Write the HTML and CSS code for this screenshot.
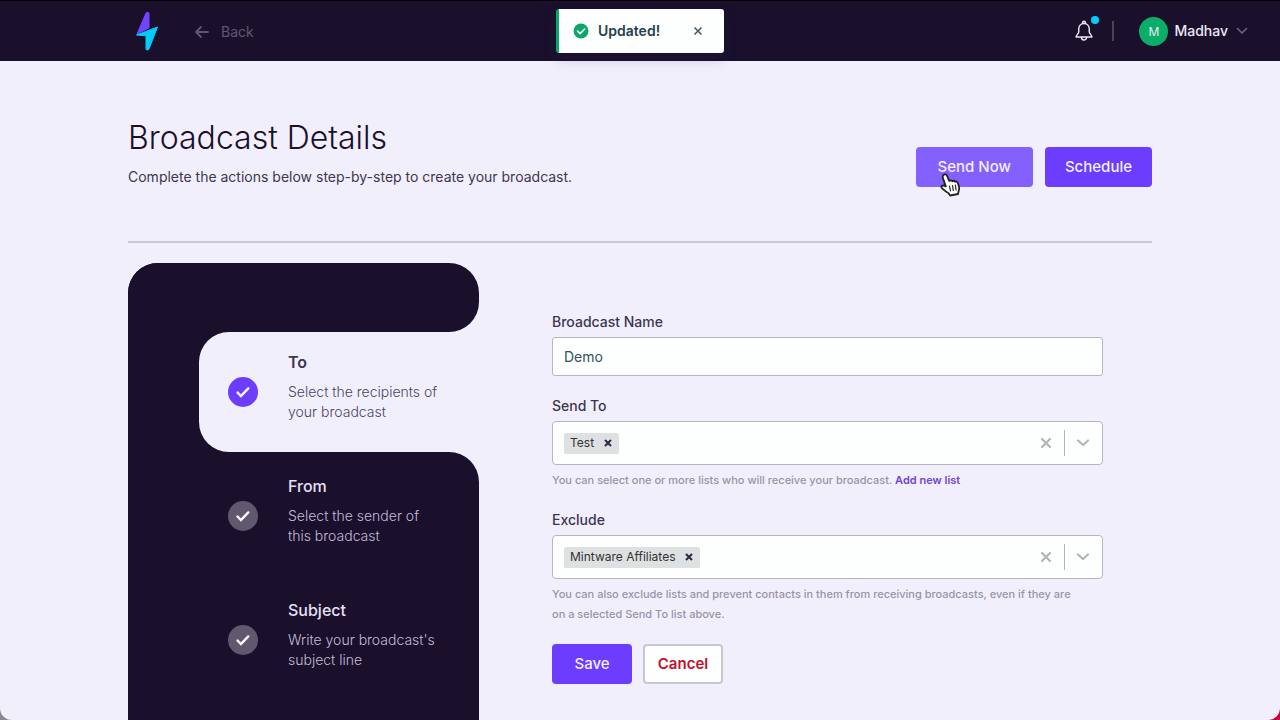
FILE: index.html
```html
<!DOCTYPE html>
<html lang="en">
<head>
  <meta charset="UTF-8" />
  <meta name="viewport" content="width=device-width, initial-scale=1.0"/>
  <title>Broadcast Details</title>
  <link rel="stylesheet" href="styles.css">
</head>
<body>
  <div class="app">
    <header class="topbar">
      <a href="#" class="logo" aria-label="Home">
        <svg width="24" height="40" viewBox="0 0 24 40">
          <path d="M14 2v15L2 23 11 2Q12 .5 14 2z" fill="#7443ff" stroke="#7443ff" stroke-linejoin="round"/>
          <path d="M1.500 24 22.500 16 14 38Q12.500 39.500 11 38.500V24.800z" fill="#0cf" stroke="#0cf" stroke-linejoin="round"/>
        </svg>
      </a>
      <a href="#" class="back">
        <svg width="16" height="14" viewBox="0 0 16 14" fill="none" stroke="currentColor" stroke-width="1.800" stroke-linecap="round" stroke-linejoin="round"><path d="M14 7H2M7 2 2 7l5 5"/></svg>
        Back
      </a>
      <div class="account">
        <button class="bell" aria-label="Notifications">
          <svg width="20" height="22" viewBox="0 0 18 20" fill="none" stroke="currentColor" stroke-width="1.300" stroke-linecap="round" stroke-linejoin="round"><path d="M9 3.200c-3 0-4.800 2.200-4.800 5v2.600c0 1.800-2.400 2.800-2.400 4.700h14.400c0-1.900-2.400-2.900-2.400-4.700V8.200c0-2.800-1.800-5-4.800-5zM7.700 3.300V2.500a1.300 1.300 0 0 1 2.600 0v.8M6.700 15.800a2.300 2.300 0 0 0 4.600 0"/></svg>
          <span class="bell-dot"></span>
        </button>
        <span class="divider"></span>
        <button class="user">
          <span class="avatar">M</span>
          Madhav
          <svg class="user-arrow" width="12" height="8" viewBox="0 0 12 8" fill="none" stroke="currentColor" stroke-width="1.600" stroke-linecap="round" stroke-linejoin="round"><path d="m1.500 1.500 4.500 4.500 4.500-4.500"/></svg>
        </button>
      </div>
      <div class="toast" role="status">
        <svg width="16" height="16" viewBox="0 0 16 16"><circle cx="8" cy="8" r="7.500" fill="#0ba768"/><path d="m4.500 8 2.600 2.600 4.600-4.600" fill="none" stroke="#fff" stroke-width="1.600" stroke-linecap="round" stroke-linejoin="round"/></svg>
        <span>Updated!</span>
        <button class="toast-close" aria-label="Close">
          <svg width="10" height="10" viewBox="0 0 10 10" stroke="currentColor" stroke-width="1.600"><path d="m1.500 1.500 7 7M8.500 1.500l-7 7"/></svg>
        </button>
      </div>
    </header>

    <main class="page">
      <div class="page-head">
        <div>
          <h1>Broadcast Details</h1>
          <p class="subtitle">Complete the actions below step-by-step to create your broadcast.</p>
        </div>
        <div class="actions">
          <button class="btn btn-send">
            Send Now
            <svg class="pointer" width="22" height="24" viewBox="0 0 22 24">
              <path d="M4.200 1.500c1.300-.7 2.400.1 2.900 1.400l2.100 5 .8-.3c1-.4 1.900-.1 2.400.6 1-.6 2-.4 2.600.5 1.300-.5 2.400.1 2.900 1.600l1 3.200c.5 1.700.3 3-.2 4.300l-.7 3.200-7.900 1.500-1.700-2.500c-2-1-4.300-2.900-6.300-4.700-1.400-1.300-.4-3.200 1.600-2.700l2.100.8-2.900-8.300c-.5-1.500.2-3 1.300-3.600z" fill="#fff" stroke="#222" stroke-width="1.800" stroke-linejoin="round"/>
              <path d="m9.500 13 1 4.800M12.500 12.500l.8 4.800M15.300 12l.8 4.800" stroke="#222" stroke-width="1.200" stroke-linecap="round"/>
            </svg>
          </button>
          <button class="btn">Schedule</button>
        </div>
      </div>

      <div class="content">
        <nav class="steps">
          <div class="steps-cap"></div>
          <a href="#" class="step active">
            <span class="check"><svg width="16" height="14" viewBox="0 0 16 14"><path d="m2.500 7.500 3.400 3.500 7.400-7.600" fill="none" stroke="#fff" stroke-width="2.400" stroke-linecap="round"/></svg></span>
            <span class="step-text">
              <strong>To</strong>
              <span>Select the recipients of<br>your broadcast</span>
            </span>
          </a>
          <div class="steps-rest">
            <a href="#" class="step">
              <span class="check"><svg width="16" height="14" viewBox="0 0 16 14"><path d="m2.500 7.500 3.400 3.500 7.400-7.600" fill="none" stroke="#fff" stroke-width="2.400" stroke-linecap="round"/></svg></span>
              <span class="step-text">
                <strong>From</strong>
                <span>Select the sender of<br>this broadcast</span>
              </span>
            </a>
            <a href="#" class="step">
              <span class="check"><svg width="16" height="14" viewBox="0 0 16 14"><path d="m2.500 7.500 3.400 3.500 7.400-7.600" fill="none" stroke="#fff" stroke-width="2.400" stroke-linecap="round"/></svg></span>
              <span class="step-text">
                <strong>Subject</strong>
                <span>Write your broadcast's<br>subject line</span>
              </span>
            </a>
          </div>
        </nav>

        <form class="form">
          <div class="field">
            <label for="name">Broadcast Name</label>
            <input type="text" id="name" class="text-input" value="Demo">
          </div>

          <div class="field">
            <label for="send-to">Send To</label>
            <div class="multi">
              <span class="chip">Test
                <button type="button" aria-label="Remove Test"><svg width="8" height="8" viewBox="0 0 8 8" stroke="currentColor" stroke-width="2"><path d="m1 1 6 6M7 1 1 7"/></svg></button>
              </span>
              <input type="text" id="send-to" class="multi-input">
              <button type="button" class="clear" aria-label="Clear"><svg width="12" height="12" viewBox="0 0 12 12" stroke="currentColor" stroke-width="2.200" stroke-linecap="round"><path d="m2 2 8 8M10 2l-8 8"/></svg></button>
              <span class="multi-line"></span>
              <button type="button" class="open" aria-label="Open"><svg width="14" height="10" viewBox="0 0 14 10" fill="none" stroke="currentColor" stroke-width="2.200" stroke-linecap="round" stroke-linejoin="round"><path d="m2 2.500 5 4.500 5-4.500"/></svg></button>
            </div>
            <p class="help">You can select one or more lists who will receive your broadcast. <a href="#">Add new list</a></p>
          </div>

          <div class="field">
            <label for="exclude">Exclude</label>
            <div class="multi">
              <span class="chip">Mintware Affiliates
                <button type="button" aria-label="Remove Mintware Affiliates"><svg width="8" height="8" viewBox="0 0 8 8" stroke="currentColor" stroke-width="2"><path d="m1 1 6 6M7 1 1 7"/></svg></button>
              </span>
              <input type="text" id="exclude" class="multi-input">
              <button type="button" class="clear" aria-label="Clear"><svg width="12" height="12" viewBox="0 0 12 12" stroke="currentColor" stroke-width="2.200" stroke-linecap="round"><path d="m2 2 8 8M10 2l-8 8"/></svg></button>
              <span class="multi-line"></span>
              <button type="button" class="open" aria-label="Open"><svg width="14" height="10" viewBox="0 0 14 10" fill="none" stroke="currentColor" stroke-width="2.200" stroke-linecap="round" stroke-linejoin="round"><path d="m2 2.500 5 4.500 5-4.500"/></svg></button>
            </div>
            <p class="help">You can also exclude lists and prevent contacts in them from receiving broadcasts, even if they are<br>on a selected Send To list above.</p>
          </div>

          <div class="form-buttons">
            <button type="submit" class="btn">Save</button>
            <button type="button" class="btn btn-cancel">Cancel</button>
          </div>
        </form>
      </div>
    </main>
  </div>
</body>
</html>
```
FILE: styles.css
```css
* {
  box-sizing: border-box;
}

html {
  background: linear-gradient(to right, #8b8b8f 50%, #c8003c 50%);
}

body {
  margin: 0;
  font-family: 'Inter', 'Liberation Sans', sans-serif;
  font-size: 14px;
  line-height: 20px;
  color: #3c3650;
}

h1, p {
  margin: 0;
}

a {
  color: inherit;
  text-decoration: none;
}

button, input {
  font: inherit;
  color: inherit;
}

button {
  padding: 0;
  border: none;
  background: none;
  cursor: pointer;
}

svg {
  display: block;
}

.app {
  height: 100vh;
  overflow: hidden;
  background-color: #f2effd;
  border-radius: 0 0 12px 12px;
}

/* top bar */
.topbar {
  position: relative;
  display: flex;
  align-items: center;
  height: 61px;
  padding: 0 32px 0 135px;
  background-color: #1a102c;
  border-top: 1px solid #05020c;
}

.back {
  display: flex;
  align-items: center;
  gap: 11px;
  margin-left: 35px;
  padding-top: 2px;
  color: #5f5870;
}

.account {
  display: flex;
  align-items: center;
  margin-left: auto;
  color: #ece8f8;
}

.bell {
  position: relative;
}

.bell-dot {
  position: absolute;
  top: -4px;
  right: -5px;
  width: 8px;
  height: 8px;
  border-radius: 50%;
  background-color: #0cf;
}

.divider {
  width: 2px;
  height: 20px;
  margin: 0 25px 0 18px;
  background-color: #4a4359;
}

.user {
  display: flex;
  align-items: center;
  gap: 6px;
  font-weight: 500;
}

.avatar {
  width: 29px;
  height: 29px;
  border-radius: 50%;
  background-color: #0bae68;
  font-size: 12px;
  font-weight: 400;
  line-height: 29px;
  text-align: center;
}

.user-arrow {
  margin-left: 2px;
  color: #6c657b;
}

.toast {
  position: absolute;
  top: 8px;
  left: 50%;
  display: flex;
  align-items: center;
  width: 168px;
  height: 44px;
  padding: 0 21px 0 14px;
  transform: translateX(-50%);
  background-color: #fcfffe;
  border-left: 3px solid #0ba768;
  border-radius: 3px;
  box-shadow: 0 6px 14px rgba(40, 40, 90, 0.2);
  font-weight: 600;
  color: #25404f;
}

.toast span {
  margin-left: 9px;
}

.toast-close {
  margin-left: auto;
  color: #4a5b66;
}

/* page */
.page {
  padding: 55px 10% 0;
}

.page-head {
  display: flex;
  align-items: flex-end;
  justify-content: space-between;
  padding-bottom: 54px;
  border-bottom: 2px solid #c8c6d9;
}

h1 {
  margin-bottom: 7px;
  font-size: 32px;
  font-weight: 300;
  line-height: 44px;
  color: #1a102c;
}

.actions {
  display: flex;
  gap: 12px;
}

.btn {
  height: 40px;
  padding: 0 20px;
  border-radius: 4px;
  background-color: #6c3cff;
  font-size: 15px;
  font-weight: 500;
  color: #f2effd;
}

.btn-send {
  position: relative;
  padding: 0 22px;
  background-color: #8460ff;
}

.pointer {
  position: absolute;
  top: 26px;
  left: 24px;
}

.content {
  display: flex;
  align-items: flex-start;
  padding-top: 20px;
}

/* steps */
.steps {
  flex: 0 0 351px;
  background: linear-gradient(to right, #1a102c 110px, transparent 110px);
  border-radius: 30px 30px 0 0;
}

.steps-cap {
  height: 69px;
  background-color: #1a102c;
  border-radius: 30px 30px 30px 0;
}

.steps-rest {
  display: flex;
  flex-direction: column;
  gap: 4px;
  min-height: 400px;
  padding-top: 4px;
  background-color: #1a102c;
  border-radius: 0 30px 0 0;
}

.step {
  display: flex;
  align-items: center;
  gap: 30px;
  height: 120px;
  margin-left: 71px;
  padding-left: 29px;
  color: #c3bcd6;
}

.step.active {
  background-color: #f2effd;
  border-radius: 30px 0 0 30px;
  color: #4b4560;
}

.check {
  display: flex;
  align-items: center;
  justify-content: center;
  width: 30px;
  height: 30px;
  border-radius: 50%;
  background-color: #5f586e;
}

.step.active .check {
  background-color: #6c3cff;
}

.step-text {
  display: flex;
  flex-direction: column;
  gap: 10px;
  padding-bottom: 10px;
  font-weight: 300;
}

.step-text strong {
  font-size: 16px;
  font-weight: 500;
  color: #e6e0f5;
}

.step.active strong {
  font-weight: 600;
  color: #3c3650;
}

/* form */
.form {
  flex: 1;
  display: flex;
  flex-direction: column;
  gap: 20px;
  padding: 49px 49px 0 73px;
}

.field {
  display: flex;
  flex-direction: column;
  gap: 5px;
}

.field label {
  font-weight: 500;
}

.text-input {
  width: 100%;
  height: 39px;
  padding: 0 11px;
  background-color: #fcfffe;
  border: 1px solid #b7b5c4;
  border-radius: 3px;
  color: #35505a;
}

.multi {
  display: flex;
  align-items: center;
  height: 44px;
  padding: 0 12px 0 11px;
  background-color: #fcfffe;
  border: 1px solid #b7b5c4;
  border-radius: 4px;
  color: #b4b5ba;
}

.chip {
  display: flex;
  align-items: center;
  gap: 10px;
  height: 21px;
  padding: 0 7px 0 6px;
  background-color: #dde1e1;
  border-radius: 2px;
  font-size: 12px;
  color: #333;
}

.chip button {
  color: #2c2848;
}

.multi-input {
  flex: 1;
  min-width: 0;
  border: none;
  outline: none;
  background: none;
}

.multi-line {
  width: 1px;
  height: 26px;
  margin: 0 11px 0 12px;
  background-color: #b4b5ba;
}

.help {
  font-size: 11px;
  font-weight: 500;
  color: #9993a8;
}

.help a {
  font-weight: 600;
  color: #7045d8;
}

.form-buttons {
  display: flex;
  gap: 11px;
}

.form-buttons .btn {
  width: 80px;
  padding: 0;
}

.form-buttons .btn-cancel {
  background-color: #fcfffe;
  border: 2px solid #c8c6d0;
  font-weight: 600;
  color: #c4102c;
}
```
